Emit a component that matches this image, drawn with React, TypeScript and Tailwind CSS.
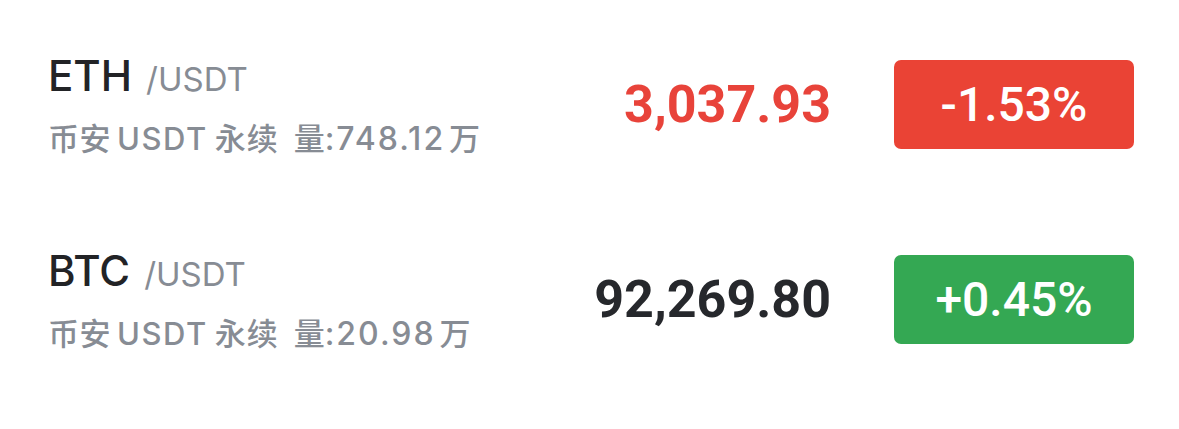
const rows = [
  { base: 'ETH', vol: '748.12', price: '3,037.93', change: '-1.53%', up: false },
  { base: 'BTC', vol: '20.98', price: '92,269.80', change: '+0.45%', up: true },
];

export default function App() {
  return (
    <div className="w-[1179px] h-[429px] bg-white pt-[7px] pl-[48px] pr-[45px]">
      {rows.map((r) => (
        <div key={r.base} className="h-[195px] flex items-center justify-between">
          {/* 币种 */}
          <div className="flex flex-col">
            <div className="flex items-baseline font-['Inter',sans-serif]">
              <span className="text-[42px] leading-none font-medium text-[#222326]">{r.base}</span>
              <span className="ml-[14px] text-[33px] leading-none text-[#878c94]">/USDT</span>
            </div>
            <div className="mt-[24px] flex items-baseline text-[#878c94] leading-none font-medium font-['Inter','Noto_Sans_CJK_SC',sans-serif]">
              <span className="text-[31px] tracking-[0.5px] font-['Noto_Sans_CJK_SC',sans-serif]">币安</span>
              <span className="ml-[6px] text-[31px] tracking-[1.5px]">USDT</span>
              <span className="ml-[7px] text-[31px] tracking-[1px] font-['Noto_Sans_CJK_SC',sans-serif]">永续</span>
              <span className="ml-[15px] text-[31px] font-['Noto_Sans_CJK_SC',sans-serif]">量</span>
              <span className="text-[32px] tracking-[2px]">:{r.vol}</span>
              <span className="ml-[4px] text-[31px] font-['Noto_Sans_CJK_SC',sans-serif]">万</span>
            </div>
          </div>

          {/* 价格 + 涨跌幅 */}
          <div className="flex items-center gap-[63px] font-['Roboto',sans-serif]">
            <span
              className={`text-[52px] leading-none font-bold ${r.up ? 'text-[#26282c]' : 'text-[#e8433a]'}`}
            >
              {r.price}
            </span>
            <div
              className={`w-[240px] h-[89px] rounded-[7px] flex items-center justify-center text-white text-[48px] leading-none font-medium ${
                r.up ? 'bg-[#34a853]' : 'bg-[#ea4335]'
              }`}
            >
              {r.change}
            </div>
          </div>
        </div>
      ))}
    </div>
  );
}
